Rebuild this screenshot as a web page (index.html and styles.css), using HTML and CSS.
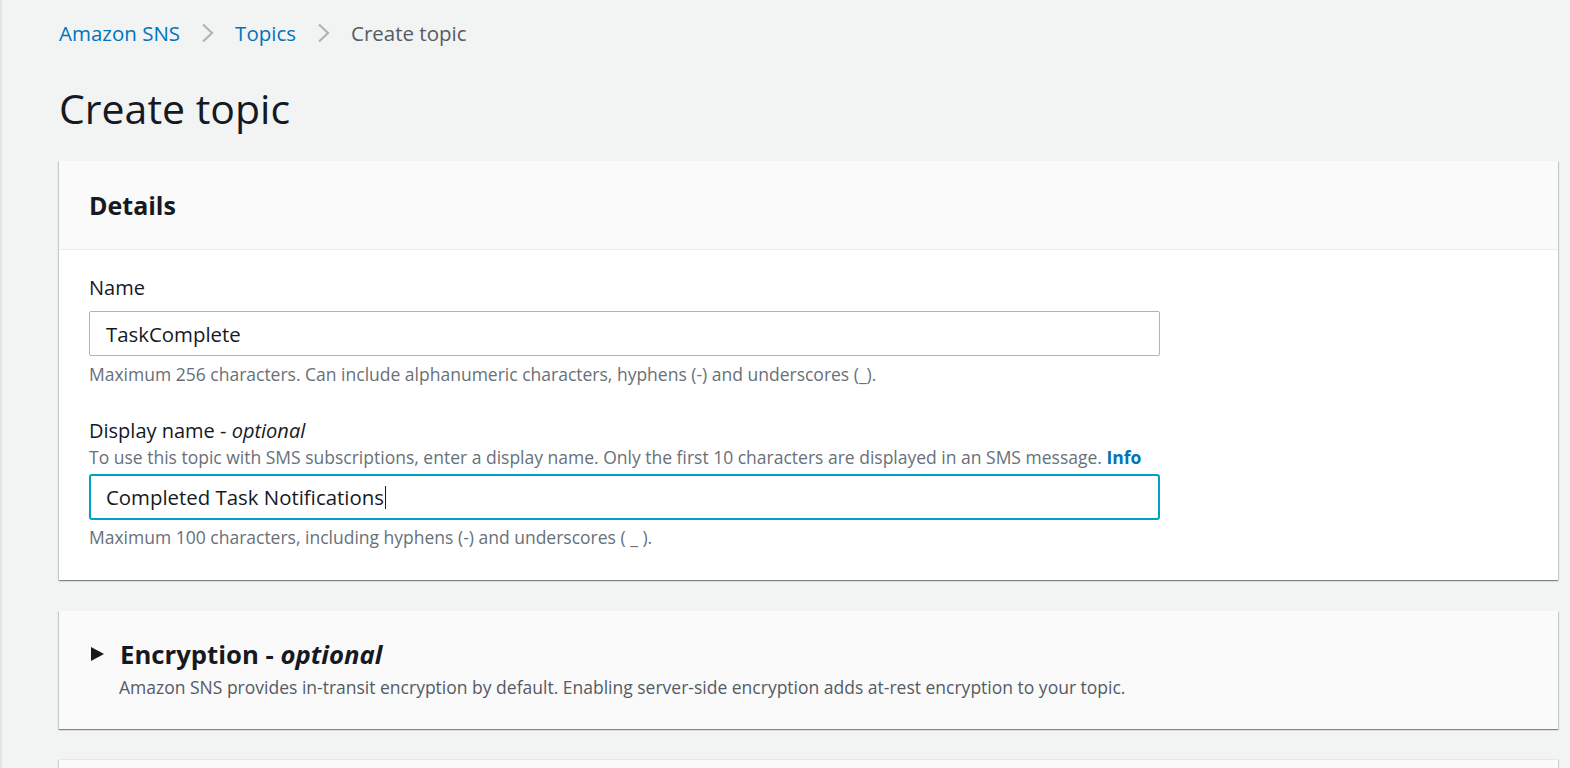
FILE: index.html
```html
<!DOCTYPE html>
<html lang="en">
<head>
<meta charset="utf-8">
<title>Create topic</title>
<link rel="stylesheet" href="styles.css">
</head>
<body>
<div class="page">
  <nav class="crumbs">
    <a class="crumb-link" href="#">Amazon SNS</a>
    <svg class="chev" viewBox="0 0 13 20" width="13" height="20"><path d="M2 1.5 L11 10 L2 18.5" fill="none" stroke="#aab7b8" stroke-width="2.2"/></svg>
    <a class="crumb-link" href="#">Topics</a>
    <svg class="chev" viewBox="0 0 13 20" width="13" height="20"><path d="M2 1.5 L11 10 L2 18.5" fill="none" stroke="#aab7b8" stroke-width="2.2"/></svg>
    <span class="crumb-current">Create topic</span>
  </nav>
  <h1 class="title">Create topic</h1>

  <section class="card">
    <header class="card-head"><h2 class="card-title">Details</h2></header>
    <div class="card-body">
      <div class="field">
        <label class="label">Name</label>
        <div class="input">TaskComplete</div>
        <p class="hint">Maximum 256 characters. Can include alphanumeric characters, hyphens (-) and underscores (_).</p>
      </div>
      <div class="field field-2">
        <label class="label">Display name - <em>optional</em></label>
        <p class="desc">To use this topic with SMS subscriptions, enter a display name. Only the first 10 characters are displayed in an SMS message. <a class="info" href="#">Info</a></p>
        <div class="input input-focus">Completed Task Notifications<span class="caret"></span></div>
        <p class="hint hint-2">Maximum 100 characters, including hyphens (-) and underscores ( _ ).</p>
      </div>
    </div>
  </section>

  <section class="card card-collapsed">
    <div class="exp-head">
      <svg class="tri" viewBox="0 0 13 14" width="13" height="14"><path d="M0 0 L13 7 L0 14 Z" fill="#16191f"/></svg>
      <h2 class="exp-title">Encryption - <em>optional</em></h2>
    </div>
    <p class="exp-desc">Amazon SNS provides in-transit encryption by default. Enabling server-side encryption adds at-rest encryption to your topic.</p>
  </section>

  <section class="card card-collapsed card-cut"></section>
</div>
</body>
</html>
```

FILE: styles.css
```css
* { box-sizing: border-box; }
html, body { margin: 0; padding: 0; height: 100%; overflow: hidden; }
body {
  background: #f2f3f3;
  font-family: "Open Sans", "Noto Sans", Arial, sans-serif;
  color: #16191f;
}
.page {
  height: 100%;
  overflow: hidden;
  border-left: 2px solid #e3e5e6;
  padding: 18px 12px 0 57px;
}
.crumbs {
  display: flex;
  align-items: center;
  gap: 21px;
  height: 30px;
  font-size: 20.5px;
}
.crumb-link { color: #0073bb; text-decoration: none; }
.crumb-current { color: #545b64; }
.chev { display: block; }
.title {
  margin: 34px 0 0 0;
  font-size: 41px;
  font-weight: 400;
  line-height: 52px;
  color: #16191f;
}
.card {
  margin-top: 27px;
  background: #fff;
  box-shadow: 0 1px 1px 0 rgba(0,28,36,.3), 1px 1px 1px 0 rgba(0,28,36,.15), -1px 1px 1px 0 rgba(0,28,36,.15);
}
.card-head {
  background: #fafafa;
  border-bottom: 1px solid #eaeded;
  height: 89px;
  display: flex;
  align-items: center;
  padding: 0 30px;
}
.card-title { margin: 0; font-size: 25px; font-weight: 700; }
.card-body { padding: 25px 30px 32px; }
.label { display: block; font-size: 20px; line-height: 26px; }
.label em { font-style: italic; }
.input {
  margin-top: 10px;
  width: 1071px;
  height: 45px;
  border: 1px solid #aab7b8;
  border-radius: 2px;
  padding: 0 16px;
  display: flex;
  align-items: center;
  font-size: 20.4px;
  color: #16191f;
}
.input-focus {
  margin-top: 6px;
  border: 2px solid #00a1c9;
  border-radius: 3px;
  padding: 0 15px;
  height: 46px;
}
.caret { display: inline-block; width: 1px; height: 23px; background: #16191f; margin-left: 1px; }
.hint { margin: 7px 0 0 0; font-size: 17.5px; line-height: 22px; color: #687078; }
.hint-2 { margin-top: 6px; }
.desc { margin: 2px 0 0 0; font-size: 17.5px; line-height: 22px; color: #687078; }
.info { color: #0073bb; font-weight: 700; text-decoration: none; }
.field-2 { margin-top: 33px; }
.card-collapsed {
  background: #fafafa;
  margin-top: 31px;
  padding: 25px 30px 30px;
  height: 118px;
}
.exp-head { display: flex; align-items: center; gap: 16px; height: 36px; }
.tri { display: block; margin-left: 2px; }
.exp-title { margin: 0; font-size: 25.7px; font-weight: 700; }
.exp-title em { font-style: italic; }
.exp-desc { margin: 4px 0 0 30px; font-size: 17.5px; line-height: 22px; color: #545b64; }
.card-cut { height: 9px; padding: 0; box-shadow: 1px 0 1px 0 rgba(0,28,36,.15), -1px 0 1px 0 rgba(0,28,36,.15); }
```
